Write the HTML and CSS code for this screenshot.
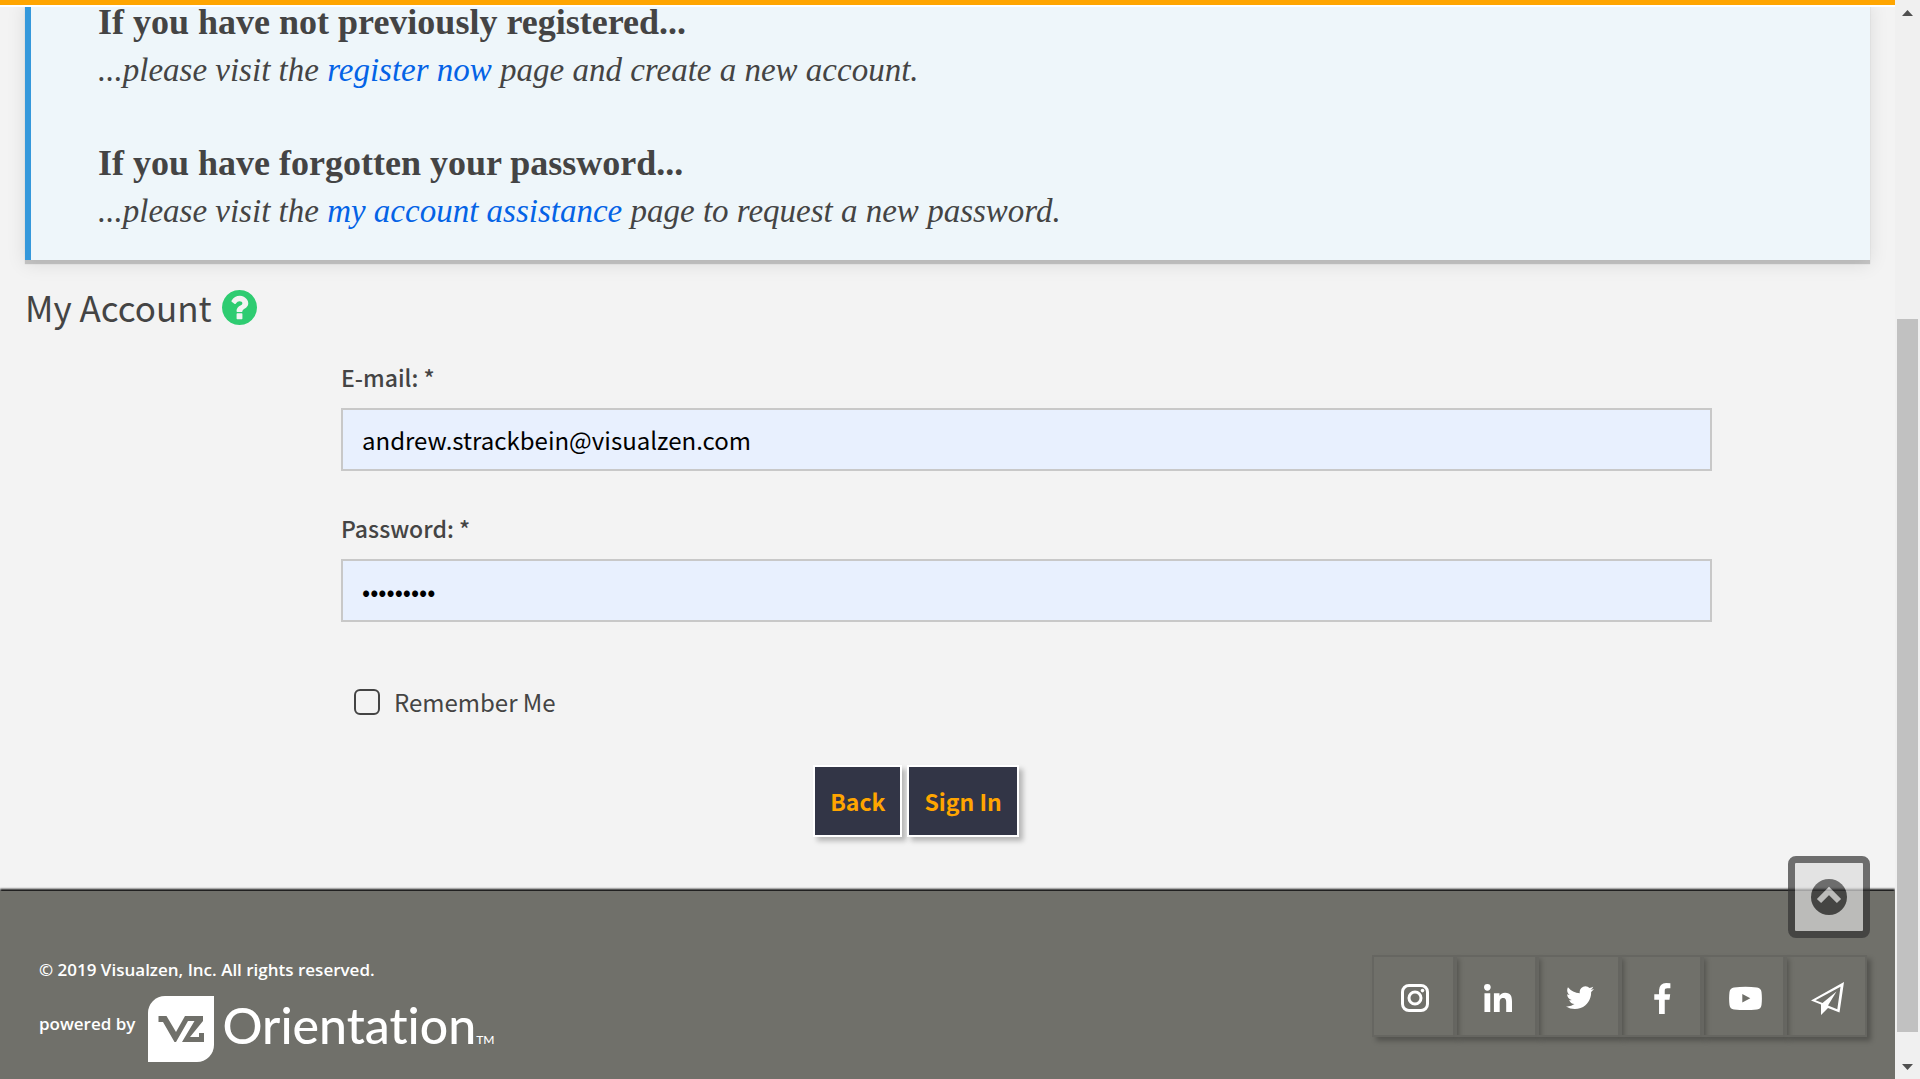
FILE: index.html
```html
<!DOCTYPE html>
<html lang="en">
<head>
<meta charset="utf-8">
<meta name="viewport" content="width=device-width, initial-scale=1">
<title>My Account - Sign In</title>
<link rel="stylesheet" href="styles.css">
</head>
<body>
<div class="page">
  <div class="topbar"></div>
  <main class="content">
    <section class="notice">
      <p><strong>If you have not previously registered...</strong></p>
      <p><em>...please visit the <a href="#register">register now</a> page and create a new account.</em></p>
      <p class="notice-gap"><strong>If you have forgotten your password...</strong></p>
      <p><em>...please visit the <a href="#assistance">my account assistance</a> page to request a new password.</em></p>
    </section>
    <h1 class="title">My Account
      <svg class="help" viewBox="128 128 1536 1536" role="img" aria-label="Help"><path d="M1024 1376v-192q0-14-9-23t-23-9h-192q-14 0-23 9t-9 23v192q0 14 9 23t23 9h192q14 0 23-9t9-23zm256-672q0-88-55.500-163t-138.500-116-170-41q-243 0-371 213-15 24 8 42l132 100q7 6 19 6 16 0 25-12 53-68 86-92 34-24 86-24 48 0 85.500 26t37.500 59q0 38-20 61t-68 45q-63 28-115.500 86.500t-52.500 125.500v36q0 14 9 23t23 9h192q14 0 23-9t9-23q0-19 21.500-49.500t54.500-49.500q32-18 49-28.500t46-35 44.500-48 28-60.500 12.500-81zm384 192q0 209-103 385.500t-279.500 279.500-385.500 103-385.500-103-279.500-279.500-103-385.500 103-385.500 279.500-279.500 385.500-103 385.500 103 279.500 279.500 103 385.500z"/></svg>
    </h1>
    <form class="signin" action="#">
      <div class="field">
        <label for="email">E-mail: *</label>
        <input id="email" type="email" value="andrew.strackbein@visualzen.com">
      </div>
      <div class="field">
        <label for="password">Password: *</label>
        <input id="password" type="password" value="visualzen">
      </div>
      <div class="remember">
        <input id="remember" type="checkbox">
        <label for="remember">Remember Me</label>
      </div>
      <div class="actions">
        <button type="button">Back</button>
        <button type="submit">Sign In</button>
      </div>
    </form>
  </main>
  <footer class="footer">
    <div class="legal">
      <p>© 2019 Visualzen, Inc. All rights reserved.</p>
      <div class="powered">
        <span class="powered-label">powered by</span>
        <a class="brand" href="#vz">
          <svg class="brand-mark" viewBox="0 0 66 66" aria-hidden="true"><path fill="#fff" d="M17 0H66V49A17 17 0 0 1 49 66H0V17A17 17 0 0 1 17 0Z"/><path fill="#70706a" d="M10.500 20H18.500L28 36L37 20H55V25L42 41H51V37H56V46H34L46.500 25H40L28 46H26.500L15 26H10.500Z"/></svg>
          <span class="brand-text"><span class="brand-name">Orientation</span><span class="brand-tm">TM</span></span>
        </a>
      </div>
    </div>
    <nav class="social">
      <a href="#instagram" aria-label="Instagram"><svg viewBox="0 0 28 28"><rect x="1.500" y="1.500" width="25" height="25" rx="6.500" fill="none" stroke="#fff" stroke-width="3"/><circle cx="14" cy="14" r="6" fill="none" stroke="#fff" stroke-width="3"/><circle cx="21.500" cy="6.600" r="1.800"/></svg></a>
      <a href="#linkedin" aria-label="LinkedIn"><svg viewBox="0 0 448 448"><path d="M100.280 448H7.400V148.900h92.880zM53.790 108.100C24.090 108.100 0 83.500 0 53.800a53.790 53.790 0 0 1 107.580 0c0 29.700-24.100 54.300-53.790 54.300zM447.900 448h-92.680V302.400c0-34.700-.7-79.200-48.290-79.200-48.290 0-55.690 37.700-55.690 76.700V448h-92.780V148.900h89.080v40.800h1.300c12.400-23.500 42.690-48.300 87.880-48.300 94 0 111.280 61.900 111.280 142.300V448z"/></svg></a>
      <a href="#twitter" aria-label="Twitter"><svg viewBox="108 128 1576 1576"><path d="M1684 408q-67 98-162 167 1 14 1 42 0 130-38 259.500t-115.500 248.500-184.500 210.500-258 146-323 54.500q-271 0-496-145 35 4 78 4 225 0 401-138-105-2-188-64.500t-114-159.500q33 5 61 5 43 0 85-11-112-23-185.500-111.500t-73.500-205.500v-4q68 38 146 41-66-44-105-115t-39-154q0-88 44-163 121 149 294.500 238.500t371.500 99.500q-8-38-8-74 0-134 94.500-228.500t228.500-94.500q140 0 236 102 109-21 205-78-37 115-142 178 93-10 186-50z"/></svg></a>
      <a href="#facebook" aria-label="Facebook"><svg class="tall" viewBox="88 0 1664 1664"><path d="M1343 12v264h-157q-86 0-116 36t-30 108v189h293l-39 296h-254v759h-306v-759h-255v-296h255v-218q0-186 104-288.500t277-102.500q147 0 228 12z"/></svg></a>
      <a href="#youtube" aria-label="YouTube"><svg class="wide" viewBox="0 0 33 33"><path fill-rule="evenodd" d="M5 5.500Q16.500 4 28 5.500Q32 6 32.500 10Q33.300 16.500 32.500 23Q32 27 28 27.500Q16.500 28.600 5 27.500Q1 27 .5 23Q-.3 16.500 .5 10Q1 6 5 5.500ZM13.300 12V20.500L21.300 16.200Z"/></svg></a>
      <a href="#subscribe" aria-label="Subscribe"><svg class="wide" viewBox="0 0 33 33"><path fill-rule="evenodd" d="M33 0L28.500 30.500L17 26L10 33V22.500L0 18.500ZM29.500 4.700L4.500 18.200L11.500 21L25.500 9.500L17 23.500L26.300 27.200Z"/></svg></a>
    </nav>
  </footer>
</div>
<div class="scrollbar" aria-hidden="true">
  <svg class="arrow" viewBox="0 0 25 25"><path d="M7 16L12.500 10L18 16Z"/></svg>
  <div class="track"><div class="thumb"></div></div>
  <svg class="arrow" viewBox="0 0 25 25"><path d="M7 10L12.500 16L18 10Z"/></svg>
</div>
<button class="to-top" type="button" aria-label="Back to top"><svg viewBox="0 0 36 36"><circle cx="18" cy="18" r="18" fill="#343434"/><path d="M8 22L18 12L28 22" fill="none" stroke="#dcdcdc" stroke-width="6"/></svg></button>
</body>
</html>
```
FILE: styles.css
```css
* { box-sizing: border-box; }

body {
  margin: 0;
  min-height: 100vh;
  display: grid;
  grid-template-columns: 1fr 25px;
  background: #f3f3f3;
  color: #444;
  font-family: "Noto Sans CJK JP", "Noto Sans", sans-serif;
  font-size: 24px;
  line-height: 32px;
}

p { margin: 0; }
a { color: #0463e6; text-decoration: none; }

.page { display: flex; flex-direction: column; min-width: 0; }

.topbar {
  position: sticky;
  top: 0;
  z-index: 2;
  height: 7px;
  margin-bottom: -7px;
  background: orange;
  border-bottom: 2px solid #fff;
}

.content { padding: 0 25px 54px; }

.notice {
  padding: 0 24px 25px 67px;
  background: #eef6fa;
  border-left: 6px solid #3498db;
  box-shadow: 0 4px 1px rgba(0, 0, 0, .18), 0 4px 18px rgba(0, 0, 0, .1);
  font-family: "Liberation Serif", serif;
  font-size: 33px;
  line-height: 47px;
}
.notice strong { font-size: 36px; line-height: 1; }
.notice-gap { margin-top: 47px; }

.title {
  display: flex;
  align-items: center;
  gap: 10px;
  margin: 23px 0 0;
  font-size: 35px;
  font-weight: 400;
  line-height: 48px;
}
.help { width: 35px; height: 35px; fill: #2ecc71; }

.signin { margin: 30px 158px 0 316px; }

.field { display: flex; flex-direction: column; gap: 15px; margin-bottom: 41px; }
.field label { font-size: 23px; font-weight: 500; }
.field input {
  height: 63px;
  padding: 0 19px;
  border: 2px solid #c8c8c8;
  background: #e8f0fe;
  color: #000;
  font: inherit;
}

.remember { display: flex; align-items: center; gap: 14px; margin: 64px 0 0 13px; }
.remember input {
  appearance: none;
  width: 26px;
  height: 26px;
  margin: 0;
  border: 2px solid #444;
  border-radius: 6px;
}

.actions { display: flex; justify-content: center; gap: 5px; margin-top: 47px; padding-right: 221px; }
.actions button {
  height: 72px;
  padding: 0 15px;
  border: 2px solid #fff;
  background: #323546;
  box-shadow: 4px 4px 5px rgba(0, 0, 0, .25);
  color: orange;
  font: inherit;
  font-size: 23px;
  font-weight: 700;
}

.footer {
  flex: 1;
  display: flex;
  justify-content: space-between;
  align-items: flex-start;
  padding: 64px 28px 16px 39px;
  background: #70706a;
  box-shadow: 0 -2px 2px #111;
  color: #fff;
  font-family: "Open Sans", sans-serif;
  font-size: 17px;
  font-weight: 600;
  line-height: 30px;
}
.powered { display: flex; align-items: center; gap: 13px; margin-top: 11px; }
.powered-label { padding-bottom: 10px; }
.brand { display: flex; align-items: center; color: #fff; font-family: Lato, sans-serif; font-weight: 500; }
.brand-mark { width: 66px; height: 66px; margin-right: 8px; }
.brand-text { display: flex; align-items: baseline; padding-top: 6px; line-height: 40px; }
.brand-name { font-size: 50px; font-variant-ligatures: none; }
.brand-tm { font-size: 12px; }

.social { display: flex; width: 495px; }
.social a {
  flex: 1;
  display: flex;
  align-items: center;
  justify-content: center;
  height: 82px;
  padding: 4px 0 0 4px;
  border: 2px solid #666661;
  box-shadow: 4px 4px 5px rgba(0, 0, 0, .25);
}
.social svg { width: 28px; height: 28px; fill: #fff; }
.social .tall { width: 31px; height: 31px; }
.social .wide { width: 33px; height: 33px; }

.scrollbar {
  position: sticky;
  top: 0;
  height: 100vh;
  display: flex;
  flex-direction: column;
  background: #f0f0f0;
}
.arrow { width: 25px; height: 25px; fill: #505050; }
.track { flex: 1; display: flex; padding: 0 2px; }
.thumb { flex: 1; margin: 294px 0 22px; background: #c1c1c1; }

.to-top {
  position: fixed;
  right: 50px;
  bottom: 141px;
  z-index: 3;
  width: 82px;
  height: 82px;
  padding: 0;
  border: 7px solid #343434;
  border-radius: 8px;
  background: #dcdcdc;
  opacity: .7;
}
.to-top svg { display: block; width: 36px; height: 36px; margin: 0 auto; }
```
